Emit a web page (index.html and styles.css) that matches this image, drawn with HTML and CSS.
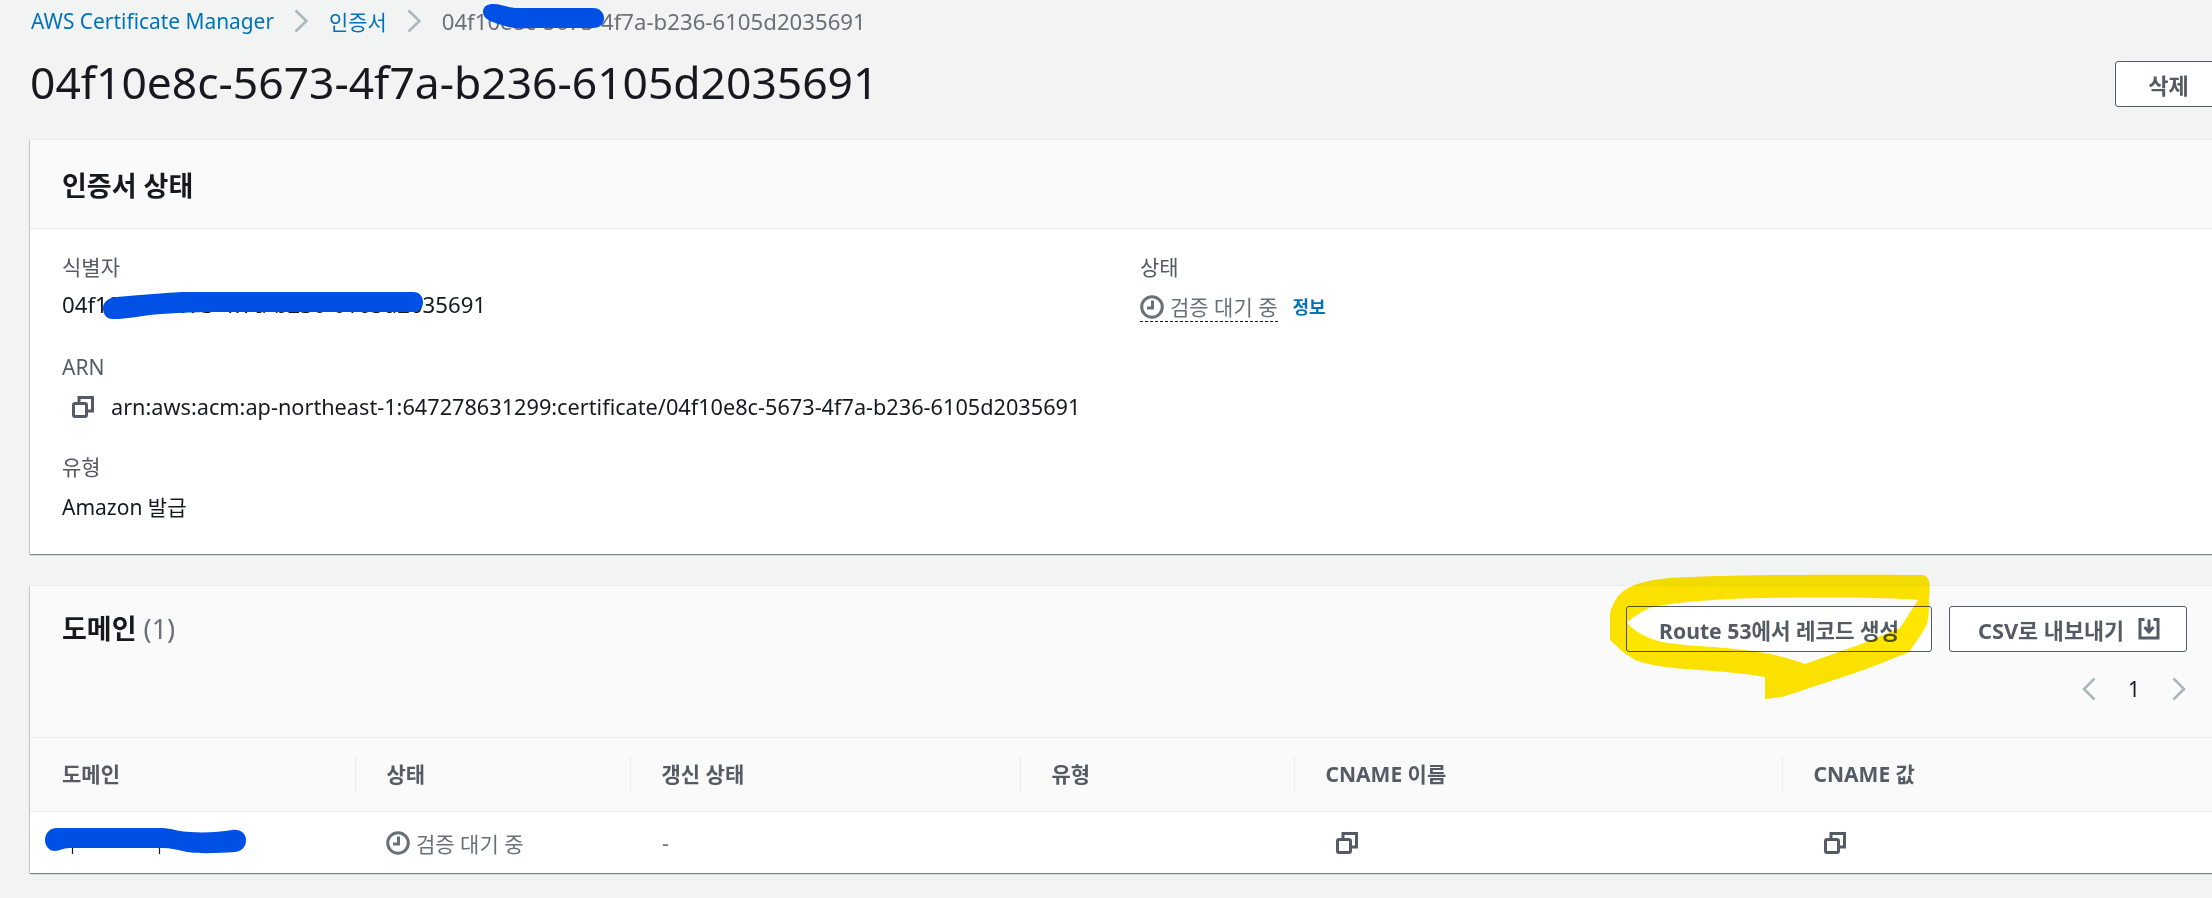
FILE: index.html
```html
<!DOCTYPE html>
<html lang="ko">
<head>
<meta charset="utf-8">
<title>AWS Certificate Manager</title>
<link rel="stylesheet" href="styles.css">
</head>
<body>
<svg width="0" height="0" class="defs">
  <defs>
    <symbol id="copy" viewBox="0 0 22 22"><rect x="1.5" y="7.5" width="13" height="13" rx="1.5"/><path d="M7 7V1.5H20.5V15H15"/></symbol>
    <symbol id="clock" viewBox="0 0 24 24"><circle cx="12" cy="12" r="10.3"/><path d="M12.5 5.5V13H7"/></symbol>
  </defs>
</svg>
<main class="page">
  <nav class="crumbs">
    <a class="link">AWS Certificate Manager</a>
    <svg class="crumb-sep" viewBox="0 0 14 24"><path d="M1.5 1.5L12.5 12L1.5 22.5"/></svg>
    <a class="link">인증서</a>
    <svg class="crumb-sep" viewBox="0 0 14 24"><path d="M1.5 1.5L12.5 12L1.5 22.5"/></svg>
    <span class="crumb-current">04f10e8c-5673-4f7a-b236-6105d2035691</span>
  </nav>
  <header class="page-head">
    <h1>04f10e8c-5673-4f7a-b236-6105d2035691</h1>
    <button class="btn btn-delete">삭제</button>
  </header>

  <section class="panel panel-status">
    <div class="panel-head"><h2>인증서 상태</h2></div>
    <div class="status-body">
      <div class="status-col">
        <div class="field">
          <div class="label">식별자</div>
          <div class="value id-text">04f10e8c-5673-4f7a-b236-6105d2035691</div>
        </div>
        <div class="field">
          <div class="label">ARN</div>
          <div class="value arn"><svg class="ico-copy"><use href="#copy"/></svg><span>arn:aws:acm:ap-northeast-1:647278631299:certificate/04f10e8c-5673-4f7a-b236-6105d2035691</span></div>
        </div>
        <div class="field">
          <div class="label">유형</div>
          <div class="value">Amazon 발급</div>
        </div>
      </div>
      <div class="status-col">
        <div class="field">
          <div class="label">상태</div>
          <div class="value state-row">
            <span class="pending dotted"><svg class="ico-clock"><use href="#clock"/></svg>검증 대기 중</span>
            <a class="info">정보</a>
          </div>
        </div>
      </div>
    </div>
  </section>

  <section class="panel panel-domains">
    <div class="domains-head">
      <div class="domains-top">
        <h2>도메인 <span class="count">(1)</span></h2>
        <div class="actions">
          <button class="btn btn-route">Route 53에서 레코드 생성</button>
          <button class="btn btn-csv">CSV로 내보내기
            <svg class="ico-dl" viewBox="0 0 22 22"><path d="M6.5 1.5H2V20H20V1.5H15.5"/><path d="M11 1.5V13M6.5 9l4.5 5 4.5-5"/></svg>
          </button>
        </div>
      </div>
      <div class="pager">
        <svg class="pg" viewBox="0 0 14 24"><path d="M12.5 1.5L2 12l10.5 10.5"/></svg>
        <span class="pg-num">1</span>
        <svg class="pg" viewBox="0 0 14 24"><path d="M1.5 1.5L12 12 1.5 22.5"/></svg>
      </div>
    </div>
    <div class="grid grid-head">
      <div class="th">도메인</div>
      <div class="th">상태</div>
      <div class="th">갱신 상태</div>
      <div class="th">유형</div>
      <div class="th">CNAME 이름</div>
      <div class="th">CNAME 값</div>
    </div>
    <div class="grid grid-row">
      <div class="td"></div>
      <div class="td pending"><svg class="ico-clock"><use href="#clock"/></svg>검증 대기 중</div>
      <div class="td muted">-</div>
      <div class="td"></div>
      <div class="td"><svg class="ico-copy"><use href="#copy"/></svg></div>
      <div class="td"><svg class="ico-copy"><use href="#copy"/></svg></div>
    </div>
  </section>
</main>

<svg class="annotations" width="2212" height="898" viewBox="0 0 2212 898">
  <path class="ticks" d="M72.5 846V854M159.5 846V854"/>
  <g class="redact">
    <path d="M483 12C483 6 488 4 493 4C502 4 508 8 517 8H593C600 8 604 13 604 18C604 24 600 28 593 28H530C520 29 512 28 505 26C495 23 483 20 483 12Z"/>
    <path d="M117 297C140 295 160 293 183 292H413C420 292 423 297 423 302C423 308 420 312 413 312H217C190 312 170 313 150 315C135 317 125 319 113 319C106 319 103 314 103 308C103 302 108 298 117 297Z"/>
    <path d="M57 828H163C175 829 180 832 190 832C205 833 220 832 232 830C241 829 246 834 246 840C246 847 242 851 235 852C220 853 200 854 187 852C178 850 170 848 163 848H70C62 848 60 851 55 851C49 851 45 846 45 840C45 834 49 828 57 828Z"/>
  </g>
  <path class="marker" fill-rule="evenodd" d="M1923 575C1931 577 1930 585 1929 600C1929 620 1928 625 1920 636L1909 652L1877 665L1855 673L1782 697L1765 699V677C1750 674 1727 672 1700 670C1670 668 1650 666 1635 660L1623 652L1610 640V613C1614 600 1618 595 1625 590C1635 583 1650 580 1670 578C1720 575 1850 574 1923 575ZM1918 600C1880 597 1780 597 1730 599C1690 601 1665 604 1650 608C1640 612 1632 618 1627 623C1635 632 1650 640 1668 643C1690 646 1720 647 1745 650C1770 653 1790 658 1805 664L1864 643L1900 628Z"/>
</svg>
</body>
</html>
```
FILE: styles.css
```css
* { box-sizing: border-box; }
html, body { margin: 0; height: 898px; overflow: hidden; }
body {
  background: #f2f3f3;
  color: #16191f;
  font-family: "Noto Sans", "Noto Sans CJK KR", sans-serif;
  font-size: 21px;
  position: relative;
}
.defs { position: absolute; }
.page { width: 2222px; padding-left: 30px; }

.crumbs { height: 42px; display: flex; align-items: center; gap: 20px; padding-left: 1px; font-size: 20.9px; }
.link { color: #0073bb; }
.crumb-sep { width: 14px; height: 24px; fill: none; stroke: #aab7b8; stroke-width: 2.6; flex: none; margin-right: 1px; }
.crumb-current { color: #687078; font-size: 22.2px; }

.page-head { height: 97px; display: flex; justify-content: space-between; align-items: flex-start; }
.page-head h1 { margin: 15px 0 0; font-size: 44.4px; line-height: 50px; font-weight: 400; }

.btn {
  font-family: inherit; font-size: 21.2px; font-weight: 700; color: #545b64;
  background: #fff; border: 1.5px solid #545b64; border-radius: 3px; height: 46px; padding: 0; cursor: pointer;
  display: flex; align-items: center; justify-content: center;
}
.btn-delete { width: 107px; margin-top: 19px; font-size: 22px; }
.btn-route { width: 306px; }
.btn-csv { width: 238px; gap: 14px; font-size: 21.8px; padding-left: 2px; }
.ico-dl { width: 22px; height: 22px; fill: none; stroke: #545b64; stroke-width: 3; }

.panel {
  background: #fff;
  border-top: 1px solid #eaeded;
  box-shadow: 0 1px 1px 0 rgba(0,28,36,.3), 1px 1px 1px 0 rgba(0,28,36,.15), -1px 1px 1px 0 rgba(0,28,36,.15);
}
.panel h2 { margin: 0; font-size: 27px; font-weight: 700; }

.panel-status { height: 415px; }
.panel-head { height: 89px; padding-left: 32px; display: flex; align-items: center; background: #fafafa; border-bottom: 1px solid #eaeded; }
.status-body { display: grid; grid-template-columns: 1078px 1fr; padding: 23px 0 0 32px; }
.field { margin-bottom: 30px; }
.label { color: #545b64; line-height: 30px; height: 30px; }
.value { line-height: 30px; margin-top: 10px; }
.id-text { font-size: 22.2px; line-height: 26px; padding-bottom: 4px; }
.arn { display: flex; align-items: center; gap: 17px; padding-left: 10px; font-size: 21.7px; }
.ico-copy { width: 22px; height: 22px; fill: none; stroke: #545b64; stroke-width: 3; flex: none; }
.ico-clock { width: 24px; height: 24px; fill: none; stroke: #687078; stroke-width: 3; flex: none; }
.pending { color: #687078; display: inline-flex; align-items: center; gap: 6px; }
.dotted { border-bottom: 1.5px dashed #16191f; line-height: 28px; }
.state-row { display: flex; align-items: center; gap: 15px; }
.info { color: #0073bb; font-weight: 700; font-size: 18px; }

.panel-domains { margin-top: 31px; height: 288px; }
.domains-head { height: 152px; background: #fafafa; border-bottom: 1px solid #eaeded; }
.domains-top { display: flex; justify-content: space-between; padding: 20px 35px 0 32px; }
.panel-domains h2 { line-height: 46px; }
.count { font-weight: 400; color: #687078; }
.actions { display: flex; gap: 17px; }
.pager { display: flex; justify-content: flex-end; align-items: center; gap: 32px; padding: 25px 36px 0 0; }
.pg { width: 14px; height: 24px; fill: none; stroke: #aab7b8; stroke-width: 2.6; }
.pg-num { font-size: 21px; line-height: 24px; }

.grid { display: grid; grid-template-columns: 325px 275px 390px 274px 488px 1fr; }
.grid-head { height: 74px; align-items: center; background: #fafafa; border-bottom: 1px solid #eaeded; }
.th { height: 37px; line-height: 37px; padding-left: 30.5px; color: #545b64; font-weight: 700; border-left: 1.5px solid #eaeded; }
.th:first-child { border-left: 0; padding-left: 32px; }
.grid-row { height: 61px; align-items: center; }
.td { padding-left: 32px; display: flex; align-items: center; }
.td .ico-copy { margin-left: 10px; }
.td.pending { gap: 6px; padding-left: 31px; }
.muted { color: #687078; }

.annotations { position: absolute; left: 0; top: 0; pointer-events: none; }
.ticks { stroke: #16191f; stroke-width: 1.2; fill: none; }
.redact path { fill: #0050e6; }
.marker { fill: #ffe600; mix-blend-mode: multiply; }
```
